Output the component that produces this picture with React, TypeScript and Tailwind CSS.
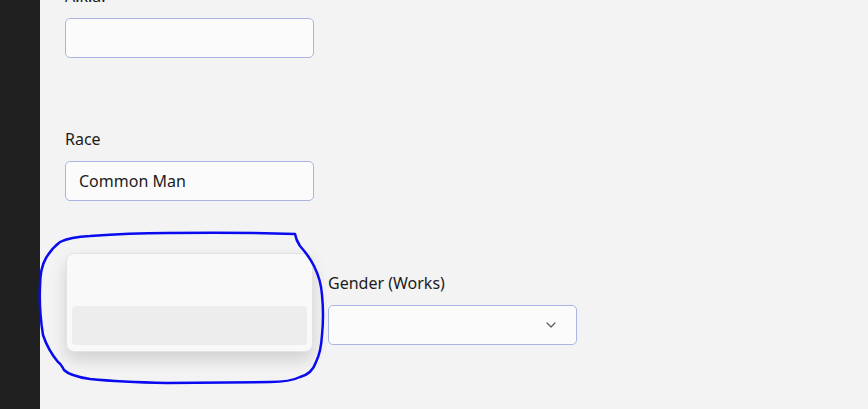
import { ReactNode } from 'react'

const font = { fontFamily: '"Noto Sans", "Open Sans", sans-serif' }

function Field({ label, children }: { label: string; children: ReactNode }) {
  return (
    <div className="flex flex-col w-[249px]">
      <label className="text-[16px] leading-[20px] text-[#1b1b1b] mb-[12px]">{label}</label>
      {children}
    </div>
  )
}

function TextBox({ value }: { value?: string }) {
  return (
    <div className="h-10 rounded-[5px] border border-[#aab4e3] bg-[#fbfbfb] px-[13px] flex items-center text-[16px] text-[#1b1b1b]">
      {value}
    </div>
  )
}

function Select() {
  return (
    <div className="h-10 rounded-[5px] border border-[#aab4e3] bg-[#fbfbfb] flex items-center justify-end pr-5">
      <svg width="10" height="6" viewBox="0 0 10 6" fill="none">
        <path d="M1 1l4 4 4-4" stroke="#5a5a5a" strokeWidth="1.2" strokeLinecap="round" strokeLinejoin="round" />
      </svg>
    </div>
  )
}

export default function App() {
  return (
    <div className="w-[868px] h-[409px] flex overflow-hidden bg-[#f3f3f3] relative" style={font}>
      <div className="w-10 h-full bg-[#202020] shrink-0" />

      <div className="flex-1 pl-[25px] -mt-[14px] flex flex-col gap-[71px]">
        <Field label="A.k.a.">
          <TextBox />
        </Field>

        <Field label="Race">
          <TextBox value="Common Man" />
        </Field>

        <div className="flex gap-[14px] mt-px">
          <div className="relative w-[249px]">
            <div className="h-[32px]" />
            <div className="h-10" />
            {/* open dropdown list */}
            <div className="absolute left-px top-[-20px] w-[247px] h-[99px] rounded-lg border border-[#e3e3e3] bg-[#f9f9f9] shadow-[0_8px_16px_rgba(0,0,0,0.14)] px-[5px] pt-[52px]">
              <div className="h-[39px] rounded-[4px] bg-[#ededed]" />
            </div>
          </div>
          <Field label="Gender (Works)">
            <Select />
          </Field>
        </div>
      </div>

      {/* hand-drawn annotation */}
      <svg className="absolute inset-0 pointer-events-none" width="868" height="409">
        <path
          d="M295 234 Q296 240 300 246 Q309 256 314 266 Q321 280 322 295 Q324 315 322 335 Q321 352 316 362 Q312 374 300 377 Q290 382 270 382 L167 383 Q120 382 90 379 Q70 376 64 370 Q61 364 58 362 Q48 350 43 335 Q39 310 40 287 Q40 268 46 258 Q52 248 60 242 Q70 237 90 236 Q130 233 167 233 Q240 232 295 234"
          fill="none"
          stroke="#0a0af0"
          strokeWidth="2.5"
          strokeLinejoin="round"
          strokeLinecap="round"
        />
      </svg>
    </div>
  )
}
